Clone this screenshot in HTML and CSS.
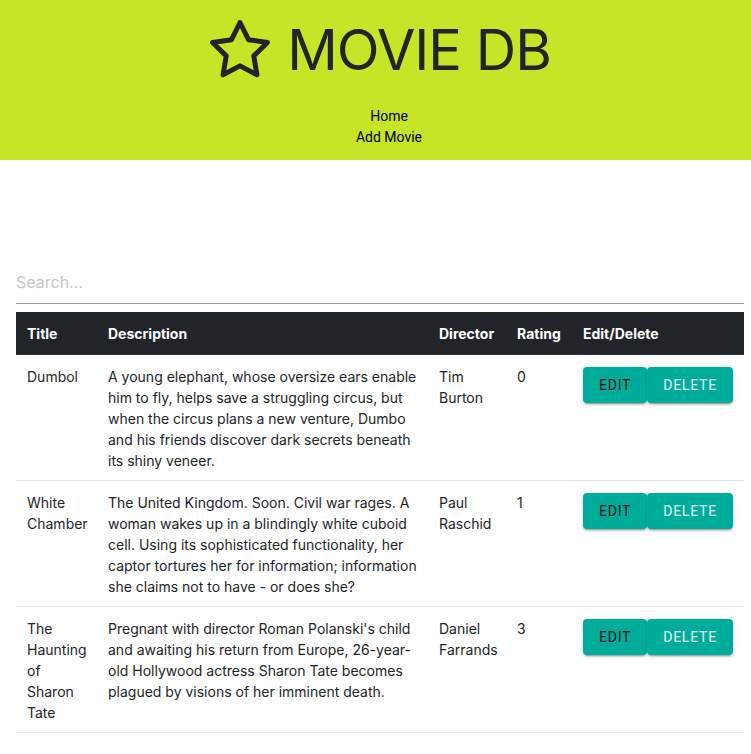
FILE: index.html
```html
<!DOCTYPE html>
<html lang="en">
<head>
<meta charset="utf-8">
<title>Movie DB</title>
<link rel="stylesheet" href="styles.css">
</head>
<body>
<header class="masthead">
  <h1 class="brand">
    <svg class="brand-star" viewBox="0 0 24 24" width="66" height="66" fill="none" stroke="currentColor" stroke-width="1.8" stroke-linecap="round" stroke-linejoin="round"><polygon points="12 2 15.09 8.26 22 9.27 17 14.14 18.18 21.02 12 17.77 5.82 21.02 7 14.14 2 9.27 8.91 8.26 12 2"/></svg>
    <span class="brand-text">MOVIE DB</span>
  </h1>
  <nav class="nav">
    <a class="nav-link" href="#">Home</a>
    <a class="nav-link" href="#">Add Movie</a>
  </nav>
</header>
<main class="content">
  <input class="search" type="text" placeholder="Search...">
  <table class="movies">
    <colgroup>
      <col class="c-title"><col class="c-desc"><col class="c-dir"><col class="c-rating"><col class="c-actions">
    </colgroup>
    <thead>
      <tr><th>Title</th><th>Description</th><th>Director</th><th>Rating</th><th>Edit/Delete</th></tr>
    </thead>
    <tbody>
      <tr>
        <td>Dumbol</td>
        <td>A young elephant, whose oversize ears enable him to fly, helps save a struggling circus, but when the circus plans a new venture, Dumbo and his friends discover dark secrets beneath its shiny veneer.</td>
        <td>Tim Burton</td>
        <td>0</td>
        <td><div class="actions"><button class="btn btn-edit">Edit</button><button class="btn btn-delete">Delete</button></div></td>
      </tr>
      <tr>
        <td>White Chamber</td>
        <td>The United Kingdom. Soon. Civil war rages. A woman wakes up in a blindingly white cuboid cell. Using its sophisticated functionality, her captor tortures her for information; information she claims not to have - or does she?</td>
        <td>Paul Raschid</td>
        <td>1</td>
        <td><div class="actions"><button class="btn btn-edit">Edit</button><button class="btn btn-delete">Delete</button></div></td>
      </tr>
      <tr>
        <td>The Haunting of Sharon Tate</td>
        <td>Pregnant with director Roman Polanski's child and awaiting his return from Europe, 26-year-old Hollywood actress Sharon Tate becomes plagued by visions of her imminent death.</td>
        <td>Daniel Farrands</td>
        <td>3</td>
        <td><div class="actions"><button class="btn btn-edit">Edit</button><button class="btn btn-delete">Delete</button></div></td>
      </tr>
    </tbody>
  </table>
</main>
</body>
</html>
```

FILE: styles.css
```css
html, body {
  margin: 0;
  padding: 0;
  background: #fff;
}
body {
  font-family: Inter, "Noto Sans", sans-serif;
  color: #212529;
}
.masthead {
  background: #c5e526;
  padding: 14px 0 12px;
  text-align: center;
}
.brand {
  margin: 0 0 20px;
  padding-left: 7px;
  display: flex;
  justify-content: center;
  align-items: center;
  gap: 14px;
  height: 72px;
  font-weight: 400;
  color: #212529;
}
.brand-star {
  display: block;
  flex: none;
}
.brand-text {
  font-family: Inter, sans-serif;
  font-size: 56px;
  line-height: 72px;
  letter-spacing: -1px;
  font-weight: 400;
}
.nav {
  display: flex;
  flex-direction: column;
  align-items: center;
  padding-left: 27px;
}
.nav-link {
  font-family: Roboto, sans-serif;
  font-size: 14px;
  line-height: 21px;
  color: #000;
  text-decoration: none;
}
.content {
  padding: 105px 7px 0 16px;
}
.search {
  display: block;
  box-sizing: border-box;
  width: 100%;
  height: 39px;
  margin: 0 0 8px;
  padding: 0 0 4px;
  border: none;
  border-bottom: 1px solid #9a9a9a;
  outline: none;
  font-family: Inter, sans-serif;
  font-size: 16px;
  color: #212529;
  background: transparent;
}
.search::placeholder {
  color: #c4c4c4;
}
.movies {
  width: 100%;
  table-layout: fixed;
  border-collapse: collapse;
  font-size: 14px;
  line-height: 21px;
}
.c-title { width: 81px; }
.c-desc { width: 331px; }
.c-dir { width: 78px; }
.c-rating { width: 66px; }
.c-actions { width: 172px; }
.movies th {
  background: #212529;
  color: #fff;
  font-weight: 700;
  text-align: left;
  padding: 11px 11px 10px;
  border-bottom: 1px solid #32383e;
}
.movies td {
  vertical-align: top;
  padding: 11px 11px 9px;
  border-bottom: 1px solid #dee2e6;
}
.actions {
  display: flex;
  margin-top: 1px;
}
.btn {
  font-family: Roboto, sans-serif;
  font-size: 14px;
  font-weight: 400;
  line-height: 24px;
  letter-spacing: 0.055em;
  text-transform: uppercase;
  padding: 6px 16px;
  border: none;
  border-radius: 4px;
  background: #00ad9b;
  box-shadow: 0 3px 1px -2px rgba(0,0,0,.2), 0 2px 2px 0 rgba(0,0,0,.14), 0 1px 5px 0 rgba(0,0,0,.12);
  cursor: pointer;
}
.btn-edit {
  color: #111;
}
.btn-delete {
  color: #e6f7f4;
}
```
